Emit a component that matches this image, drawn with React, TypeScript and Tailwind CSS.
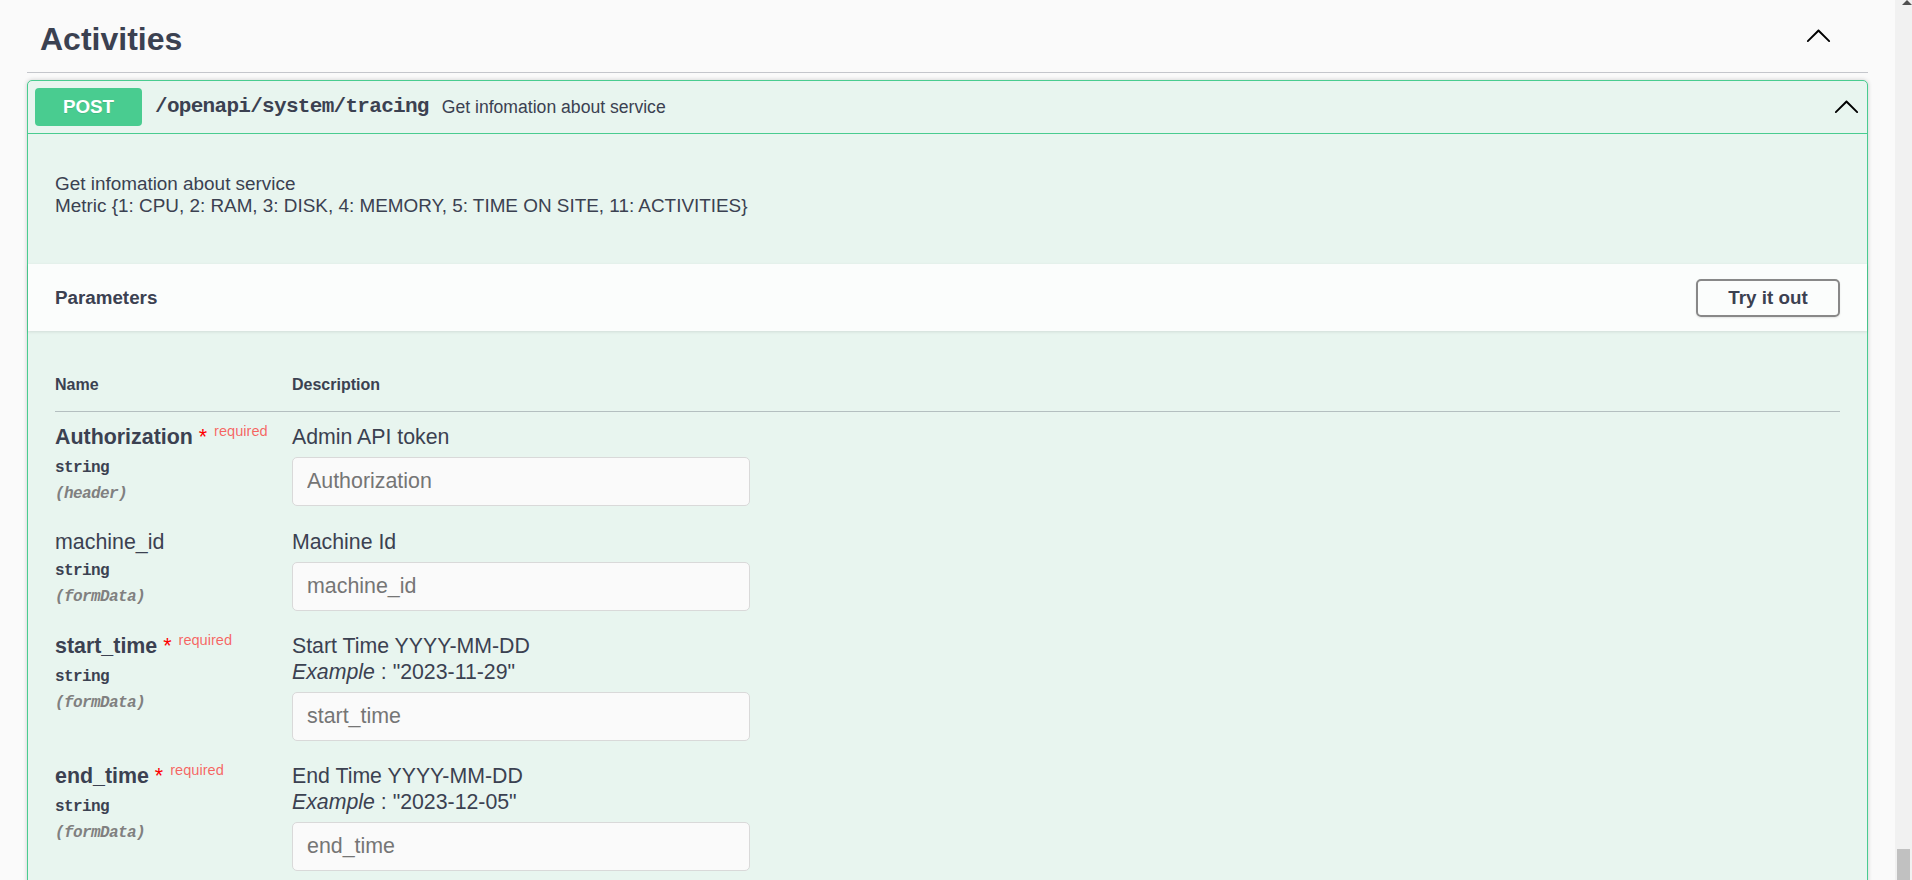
import React from "react";

function Chevron() {
  return (
    <svg width="27" height="27" viewBox="0 0 20 20" className="shrink-0">
      <path
        fill="#000"
        d="M17.418 13.891c.272.268.709.268.979 0s.271-.701 0-.969l-7.908-7.83c-.27-.268-.707-.268-.979 0l-7.908 7.83c-.27.268-.27.701 0 .969.271.268.709.268.979 0L10 6.75l7.418 7.141z"
      />
    </svg>
  );
}

type Param = {
  name: string;
  required: boolean;
  where: string;
  desc: string;
  example?: string;
  placeholder: string;
};

const params: Param[] = [
  { name: "Authorization", required: true, where: "header", desc: "Admin API token", placeholder: "Authorization" },
  { name: "machine_id", required: false, where: "formData", desc: "Machine Id", placeholder: "machine_id" },
  { name: "start_time", required: true, where: "formData", desc: "Start Time YYYY-MM-DD", example: '"2023-11-29"', placeholder: "start_time" },
  { name: "end_time", required: true, where: "formData", desc: "End Time YYYY-MM-DD", example: '"2023-12-05"', placeholder: "end_time" },
];

function ParamRow({ p }: { p: Param }) {
  return (
    <div className="flex py-[11px]">
      <div className="w-[237px] shrink-0">
        <div
          className={
            p.required
              ? "text-[21.4px] leading-[26px] font-bold text-[#3b4151] whitespace-nowrap"
              : "text-[21.4px] leading-[26px] font-normal text-[#3b4151] whitespace-nowrap"
          }
        >
          {p.name}
          {p.required && (
            <>
              <span className="text-[#ff0000] font-normal">{"\u00a0*"}</span>
              <span className="relative top-[-8px] px-[7px] text-[14.6px] font-normal text-[rgba(255,0,0,0.6)]">
                required
              </span>
            </>
          )}
        </div>
        <div className="mt-[3px] text-[16px] leading-[26px] font-bold tracking-[-0.6px] text-[#3b4151] font-['Liberation_Mono',monospace]">
          string
        </div>
        <div className="text-[16px] leading-[26px] font-bold italic tracking-[-0.6px] text-[#808080] font-['Liberation_Mono',monospace]">
          ({p.where})
        </div>
      </div>
      <div className="flex-1">
        <div className="text-[21.3px] leading-[26px] text-[#3b4151]">{p.desc}</div>
        {p.example && (
          <div className="text-[21.3px] leading-[26px] text-[#3b4151]">
            <i>Example</i> : {p.example}
          </div>
        )}
        <input
          placeholder={p.placeholder}
          className="mt-[7px] block h-[49px] w-[458px] rounded-[5px] border border-[#d9d9d9] bg-[#fafafa] pl-[14px] text-[21.4px] text-[#3b4151] outline-none placeholder:text-[#757575] font-['Liberation_Sans',Arial,sans-serif]"
        />
      </div>
    </div>
  );
}

export default function App() {
  return (
    <div className="flex h-[880px] overflow-hidden bg-[#fafafa] text-[#3b4151] font-['Liberation_Sans',Arial,sans-serif]">
      <div className="flex-1 min-w-0 px-[27px]">
        {/* Tag heading */}
        <div className="flex items-start justify-between border-b border-[#c4c6cb] pl-[13px] pr-[36px] pt-[19px] pb-[13px]">
          <h3 className="text-[32px] leading-[40px] font-bold text-[#3b4151]">Activities</h3>
          <div className="mt-[4px]">
            <Chevron />
          </div>
        </div>

        {/* Operation block */}
        <div className="mt-[7px] rounded-[5px] border border-[#49cc90] bg-[#e8f5ef] shadow-[0_0_4px_rgba(0,0,0,0.19)]">
          {/* Summary */}
          <div className="flex items-center border-b border-[#49cc90] p-[7px]">
            <div className="flex h-[38px] w-[107px] shrink-0 items-center justify-center rounded-[4px] bg-[#49cc90] text-[18.8px] font-bold text-white [text-shadow:0_1px_0_rgba(0,0,0,0.1)]">
              POST
            </div>
            <span className="ml-[13px] text-[21px] font-bold tracking-[-0.7px] text-[#3b4151] font-['Liberation_Mono',monospace]">
              /openapi/system/tracing
            </span>
            <span className="ml-[13px] text-[17.6px] text-[#3b4151]">Get infomation about service</span>
            <div className="ml-auto">
              <Chevron />
            </div>
          </div>

          {/* Description */}
          <div className="mb-[7px] px-[27px] pt-[20px] pb-[22px]">
            <p className="my-[19px] text-[18.9px] leading-[21.6px] text-[#3b4151]">
              Get infomation about service
              <br />
              Metric {"{"}1: CPU, 2: RAM, 3: DISK, 4: MEMORY, 5: TIME ON SITE, 11: ACTIVITIES{"}"}
            </p>
          </div>

          {/* Parameters header */}
          <div className="flex h-[67px] items-center justify-between bg-[rgba(255,255,255,0.8)] px-[27px] shadow-[0_1px_3px_rgba(0,0,0,0.1)]">
            <h4 className="text-[18.8px] font-bold text-[#3b4151]">Parameters</h4>
            <button className="h-[38px] w-[144px] rounded-[5px] border-2 border-[#888888] bg-transparent text-[18.8px] font-bold text-[#3b4151] shadow-[0_1px_2px_rgba(0,0,0,0.1)]">
              Try it out
            </button>
          </div>

          {/* Table */}
          <div className="p-[27px]">
            <div className="flex border-b border-[#b4bfc0] pt-[18px] pb-[17px] text-[16px] leading-[18px] font-bold text-[#3b4151]">
              <div className="w-[237px] shrink-0">Name</div>
              <div>Description</div>
            </div>
            <div className="pt-[1px]">
              {params.map((p) => (
                <ParamRow key={p.name} p={p} />
              ))}
            </div>
          </div>
        </div>
      </div>

      {/* Scrollbar */}
      <div className="flex w-[17px] shrink-0 flex-col justify-between bg-[#f1f1f1]">
        <svg width="17" height="6" viewBox="0 0 17 6">
          <polygon points="7,5 12,0 17,5" fill="#505050" />
        </svg>
        <div className="mx-[2px] h-[31px] bg-[#c1c1c1]" />
      </div>
    </div>
  );
}
